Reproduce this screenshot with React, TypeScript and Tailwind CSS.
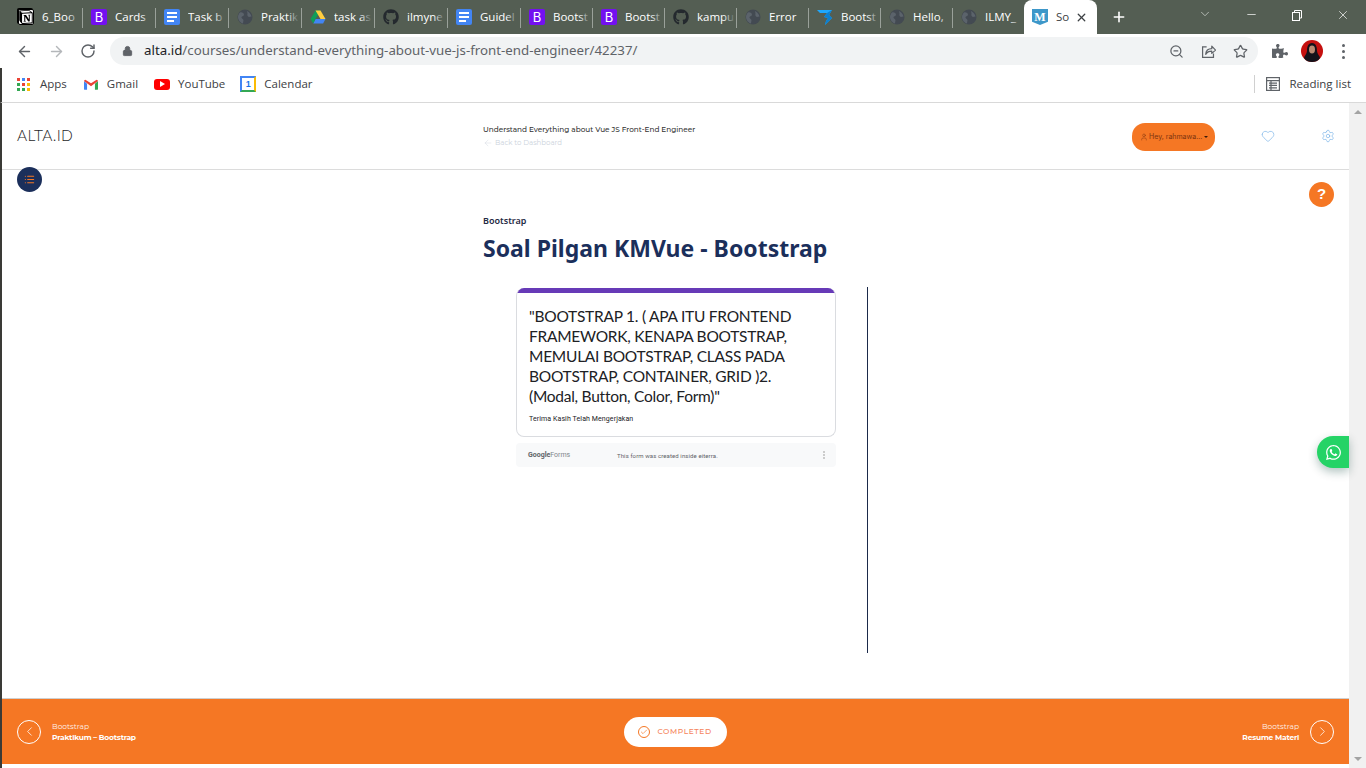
import React from "react";
import { ArrowLeft, ArrowRight, RotateCw, Lock, ZoomOut, Star, ChevronDown, Minus, X, Plus, Heart, Settings, User, ChevronLeft, ChevronRight, Check, List } from "lucide-react";
import { FaGithub, FaWhatsapp, FaPuzzlePiece } from "react-icons/fa";
import { SiNotion } from "react-icons/si";

const BootstrapIcon = () => (
  <div className="w-4 h-4 rounded-[2px] bg-[#7310f0] flex items-center justify-center text-white text-[13px] leading-none font-['Inter',sans-serif]">B</div>
);
const DocsIcon = () => (
  <div className="w-4 h-4 rounded-[2px] bg-[#4285f4] flex flex-col justify-center gap-[2px] pl-[3px]">
    <div className="w-[10px] h-[2px] bg-white" />
    <div className="w-[10px] h-[2px] bg-white" />
    <div className="w-[7px] h-[2px] bg-white" />
  </div>
);
const DarkGlobe = () => (
  <svg viewBox="0 0 16 16" className="w-4 h-4">
    <circle cx="8" cy="8" r="7.5" fill="#434a52" />
    <path d="M3 3.5 C5 3 7 4 7 6 C7 7 5 7 4.5 8 C4 9 6 10 6.5 11 L6 14.5 C3.5 14 1 11 1 8 C1 6 2 4.5 3 3.5Z M10 2 C12 3 14 5 14.5 7.5 L12 8 C10.5 7.5 10 6 10.5 4.5Z" fill="#5b636b" />
  </svg>
);
const DriveIcon = () => (
  <svg viewBox="0 0 16 16" className="w-4 h-4">
    <path d="M5.5 1.5h5L5.5 10H.5z" fill="#0f9d58" />
    <path d="M5.5 1.5h5l5 8.5h-5z" fill="#ffcd40" />
    <path d="M3.2 14.5 5.5 10h10l-2.4 4.5z" fill="#4285f4" />
    <path d="M.5 10h5l-2.3 4.5z" fill="#0f9d58" />
  </svg>
);
const TwIcon = () => (
  <svg viewBox="0 0 16 18" className="w-4 h-[18px]">
    <path d="M0 2h15l-3 5 3 3-7 7 1-4 2-3-4-1 3-4H3z" fill="#1ea7fd" />
    <path d="M15 2l-3 5 3 3-7 7 1-4 2-3-4-1 3-4z" fill="#0c7fd0" />
  </svg>
);
const NotionIcon = () => (
  <div className="w-4 h-4 bg-white rounded-[2px] flex items-center justify-center border border-black shadow-[-1px_-1px_0_#000]">
    <SiNotion className="w-[18px] h-[18px] text-black" />
  </div>
);
const MIcon = () => (
  <div className="w-4 h-4 bg-[#3d97c9] [clip-path:polygon(0_0,100%_0,100%_80%,50%_100%,0_80%)] flex items-center justify-center text-white text-[12px] font-bold leading-none font-['Liberation_Serif',serif]">M</div>
);

const tabs: [React.ReactNode, string][] = [
  [<NotionIcon />, "6_Boo"],
  [<BootstrapIcon />, "Cards"],
  [<DocsIcon />, "Task b"],
  [<DarkGlobe />, "Praktik"],
  [<DriveIcon />, "task as"],
  [<FaGithub className="w-4 h-4 text-[#24292e]" />, "ilmyne"],
  [<DocsIcon />, "Guidel"],
  [<BootstrapIcon />, "Bootst"],
  [<BootstrapIcon />, "Bootst"],
  [<FaGithub className="w-4 h-4 text-[#24292e]" />, "kampu"],
  [<DarkGlobe />, "Error"],
  [<TwIcon />, "Bootst"],
  [<DarkGlobe />, "Hello,"],
  [<DarkGlobe />, "ILMY_"],
];

const ff = "font-['Open_Sans',sans-serif]";

function TabStrip() {
  return (
    <div className="h-[34px] bg-[#545e53] flex items-start pl-[10px] shrink-0">
      {tabs.map(([icon, label], i) => (
        <div key={i} className={`${i < 7 ? "w-[73px]" : "w-[72px]"} h-[34px] flex items-center relative pl-2 shrink-0`}>
          <div className="w-4 h-4 flex items-center justify-center shrink-0">{icon}</div>
          <div className={`ml-2 w-[38px] overflow-hidden whitespace-nowrap text-[11.5px] text-white ${ff} relative`}>
            {label}
            <div className="absolute right-0 top-0 bottom-0 w-3 bg-gradient-to-r from-transparent to-[#545e53]" />
          </div>
          {i < 13 && <div className="absolute right-0 top-[8px] h-[20px] w-px bg-[#9aa19a]" />}
        </div>
      ))}
      <div className="w-[73px] h-[34px] bg-white rounded-t-lg flex items-center pl-2 shrink-0 ml-[-1px]">
        <MIcon />
        <div className={`ml-2 w-[14px] overflow-hidden whitespace-nowrap text-[11.5px] text-[#3c4043] ${ff}`}>So</div>
        <X className="ml-[5px] w-[13px] h-[13px] text-[#3c4043]" strokeWidth={2.4} />
      </div>
      <Plus className="ml-[14px] mt-[9px] w-[16px] h-[16px] text-white shrink-0" strokeWidth={2.4} />
      <ChevronDown className="ml-[71px] mt-[7px] w-[14px] h-[14px] text-[#d8dcd8] shrink-0" strokeWidth={1.2} />
      <Minus className="ml-[33px] mt-[8px] w-[13px] h-[13px] text-white shrink-0" strokeWidth={1.3} />
      <svg viewBox="0 0 12 12" className="ml-[33px] mt-[9px] w-[12px] h-[12px] shrink-0 text-white" fill="none" stroke="currentColor">
        <rect x="1.5" y="3.5" width="7" height="8" />
        <path d="M3.5 3.5V1.5h7v7.5h-2" />
      </svg>
      <X className="ml-[33px] mt-[8px] w-[14px] h-[14px] text-white shrink-0" strokeWidth={1.2} />
    </div>
  );
}

function Toolbar() {
  return (
    <div className="h-[34px] bg-white flex items-center pl-[16px] shrink-0">
      <ArrowLeft className="w-[17px] h-[17px] text-[#5f6368]" strokeWidth={2} />
      <ArrowRight className="ml-[15px] w-[17px] h-[17px] text-[#b4b7ba]" strokeWidth={2} />
      <RotateCw className="ml-[15px] w-[16px] h-[16px] text-[#5f6368]" strokeWidth={2.2} />
      <div className="ml-[14px] w-[1148px] h-[28px] rounded-full bg-[#f1f3f4] flex items-center pl-[12px] pr-[10px]">
        <Lock className="w-[11px] h-[12px] text-[#5f6368] fill-[#5f6368]" strokeWidth={2} />
        <div className="ml-[11px] text-[13.3px] text-[#5f6368] font-['Noto_Sans',sans-serif] whitespace-nowrap">
          <span className="text-[#202124]">alta.id</span>/courses/understand-everything-about-vue-js-front-end-engineer/42237/
        </div>
        <div className="flex-1" />
        <ZoomOut className="w-[15px] h-[15px] text-[#5f6368]" strokeWidth={2} />
        <svg viewBox="0 0 16 16" className="ml-[17px] w-[15px] h-[15px] text-[#5f6368]" fill="none" stroke="currentColor" strokeWidth="1.3">
          <path d="M6 3H1.7v11.3h11.6V10" />
          <path d="M5 11c.3-4 3-6 6.5-6V2.3L15.5 6.5 11.5 10V7.6C9 7.6 6.5 8.5 5 11z" strokeLinejoin="round" />
        </svg>
        <Star className="ml-[17px] w-[15px] h-[15px] text-[#5f6368]" strokeWidth={2} />
      </div>
      <FaPuzzlePiece className="ml-[14px] w-[16px] h-[16px] text-[#5f6368]" />
      <svg viewBox="0 0 22 22" className="ml-[13px] w-[22px] h-[22px] shrink-0">
        <circle cx="11" cy="11" r="11" fill="#c5100f" />
        <path d="M11 3c4 0 5 4 5 8 0 3 3 5 3 7-2 3-5 4-8 4s-6-1-8-4c0-2 3-4 3-7 0-4 1-8 5-8z" fill="#14121a" />
        <ellipse cx="11" cy="9.5" rx="3" ry="4" fill="#b98a72" />
      </svg>
      <div className="ml-[19px] flex flex-col gap-[3px]">
        <div className="w-[3px] h-[3px] rounded-full bg-[#5f6368]" />
        <div className="w-[3px] h-[3px] rounded-full bg-[#5f6368]" />
        <div className="w-[3px] h-[3px] rounded-full bg-[#5f6368]" />
      </div>
    </div>
  );
}

const appColors = ["#ea4335", "#4285f4", "#ea4335", "#34a853", "#ea4335", "#fbbc04", "#34a853", "#34a853", "#fbbc04"];

function Bookmarks() {
  const t = `text-[11.5px] text-[#3c4043] ${ff}`;
  return (
    <div className="h-[35px] bg-white flex items-center pl-[15px] border-l-2 border-l-[#3a3a36] border-b border-b-[#d9d9d9] shrink-0 pb-[2px]">
      <div className="grid grid-cols-3 gap-[2px] w-[13px]">
        {appColors.map((c, i) => (
          <div key={i} className="w-[3px] h-[3px]" style={{ background: c }} />
        ))}
      </div>
      <span className={`ml-[10px] ${t}`}>Apps</span>
      <svg viewBox="0 0 16 12" className="ml-[17px] w-[14px] h-[11px]">
        <path d="M0 2v9a1 1 0 0 0 1 1h2.5V5z" fill="#4285f4" />
        <path d="M16 2v9a1 1 0 0 1-1 1h-2.5V5z" fill="#34a853" />
        <path d="M0 2 8 8l8-6a1.5 1.5 0 0 0-2.5-1L8 4.5 2.5 1A1.5 1.5 0 0 0 0 2z" fill="#ea4335" />
      </svg>
      <span className={`ml-[9px] ${t}`}>Gmail</span>
      <div className="ml-[16px] w-[16px] h-[11px] bg-[#f00] rounded-[3px] flex items-center justify-center">
        <div className="w-0 h-0 border-y-[3px] border-y-transparent border-l-[5px] border-l-white" />
      </div>
      <span className={`ml-[8px] ${t}`}>YouTube</span>
      <div className="ml-[15px] w-[16px] h-[16px] border-2 border-t-[#4285f4] border-l-[#4285f4] border-r-[#fbbc04] border-b-[#34a853] flex items-center justify-center text-[9px] leading-none font-bold text-[#1a73e8] font-['Liberation_Sans',sans-serif]">1</div>
      <span className={`ml-[8px] ${t}`}>Calendar</span>
      <div className="flex-1" />
      <div className="w-px h-[18px] bg-[#d0d0d0]" />
      <svg viewBox="0 0 14 14" className="ml-[11px] w-[14px] h-[14px]" fill="none" stroke="#5f6368" strokeWidth="1.2">
        <rect x=".6" y=".6" width="12.8" height="12.8" />
        <path d="M.6 3.6h12.8M3 6.2h8M3 8.4h8M3 10.8h8M5 3.6v9.8" />
      </svg>
      <span className={`ml-[9px] mr-[15px] ${t}`}>Reading list</span>
    </div>
  );
}

function SiteHeader() {
  return (
    <div className="h-[67px] border-b border-[#dcdcdc] flex items-center pl-[15px] shrink-0">
      <div className="w-[466px] text-[15.5px] font-light text-[#1f1f28] font-['Lato',sans-serif] tracking-[0.3px]">ALTA.ID</div>
      <div className="w-[649px] font-['Montserrat','Inter',sans-serif]">
        <div className="text-[7.3px] leading-[12px] text-[#333] font-medium">Understand Everything about Vue JS Front-End Engineer</div>
        <div className="text-[7px] leading-[12px] mt-[1px] text-[#ccd3dc] flex items-center">
          <ArrowLeft className="w-[10px] h-[10px] mr-[2px]" strokeWidth={1} />
          Back to Dashboard
        </div>
      </div>
      <div className="w-[83px] h-[28px] mt-[2px] bg-[#f57724] rounded-[13px] flex items-center pl-[8px] text-[7px] text-[#7c3410] font-['Inter',sans-serif] whitespace-nowrap">
        <User className="w-[8px] h-[8px] mr-[1px]" strokeWidth={1.5} />
        Hey, rahmawa...
        <div className="ml-[2px] w-0 h-0 border-x-[2px] border-x-transparent border-t-[2px] border-t-[#3a1a08]" />
      </div>
      <Heart className="ml-[46px] w-[14px] h-[14px] text-[#7eb6e8]" strokeWidth={1.2} />
      <Settings className="ml-[46px] w-[14px] h-[14px] text-[#7eb6e8]" strokeWidth={1.2} />
    </div>
  );
}

function FormEmbed() {
  return (
    <div className="w-[385px] h-[366px] mt-[24px] border-r border-[#1b2a4a] pl-[33px] pt-px">
      <div className="w-[320px] h-[149px] rounded-lg border border-[#dadce0] border-t-0 bg-white overflow-hidden">
        <div className="h-[5px] bg-[#673ab7] mx-[-1px]" />
        <div className="pl-[12px] pt-[13px] text-[15.5px] leading-[20px] text-[#202124] font-['Lato',sans-serif] tracking-[-0.25px]">
          "BOOTSTRAP 1. ( APA ITU FRONTEND<br />FRAMEWORK, KENAPA BOOTSTRAP,<br />MEMULAI BOOTSTRAP, CLASS PADA<br />BOOTSTRAP, CONTAINER, GRID )2.<br />(Modal, Button, Color, Form)"
        </div>
        <div className="pl-[12px] mt-[9px] text-[7px] leading-[9px] text-[#202124] font-['Roboto',sans-serif] tracking-[0.1px]">Terima Kasih Telah Mengerjakan</div>
      </div>
      <div className="w-[320px] h-[24px] mt-[6px] bg-[#f8f9fa] rounded flex items-center pl-[12px] font-['Roboto',sans-serif]">
        <span className="w-[89px] text-[7px] whitespace-nowrap">
          <span className="font-bold text-[#5f6368]">Google</span>
          <span className="text-[#80868b]">Forms</span>
        </span>
        <span className="text-[6px] text-[#5f6368] tracking-[0.1px]">This form was created inside eiterra.</span>
        <div className="flex-1" />
        <div className="mr-[11px] flex flex-col gap-px">
          <div className="w-[2px] h-[2px] bg-[#ccc]" />
          <div className="w-[2px] h-[2px] bg-[#ccc]" />
          <div className="w-[2px] h-[2px] bg-[#ccc]" />
        </div>
      </div>
    </div>
  );
}

function Footer() {
  const f = "font-['Montserrat','Inter',sans-serif]";
  return (
    <div className="h-[66px] border-t border-[#cfcfcf] bg-[#f57724] flex items-center px-[15px] shrink-0 text-white relative">
      <div className="w-[24px] h-[24px] rounded-full border border-white flex items-center justify-center">
        <ChevronLeft className="w-[15px] h-[15px]" strokeWidth={1.2} />
      </div>
      <div className={`ml-[11px] pt-px ${f} text-[7.5px] leading-[11px]`}>
        <div className="text-[#fff1e8]">Bootstrap</div>
        <div className="font-bold whitespace-nowrap tracking-[-0.2px]">Praktikum – Bootstrap</div>
      </div>
      <div className="flex-1 flex justify-center pr-[28px]">
        <div className={`w-[103px] h-[30px] bg-white rounded-full flex items-center justify-center gap-[7px] text-[7.5px] font-medium tracking-[0.6px] text-[#f5845c] ${f}`}>
          <div className="w-[12px] h-[12px] rounded-full border border-[#f57724] flex items-center justify-center">
            <Check className="w-[8px] h-[8px] text-[#f57724]" strokeWidth={2} />
          </div>
          COMPLETED
        </div>
      </div>
      <div className={`mr-[11px] pt-px ${f} text-[7.5px] leading-[11px] text-right`}>
        <div className="text-[#fff1e8]">Bootstrap</div>
        <div className="font-bold whitespace-nowrap tracking-[-0.2px]">Resume Materi</div>
      </div>
      <div className="w-[24px] h-[24px] rounded-full border border-white flex items-center justify-center">
        <ChevronRight className="w-[15px] h-[15px]" strokeWidth={1.2} />
      </div>
    </div>
  );
}

export default function App() {
  return (
    <div className="w-[1366px] h-[768px] overflow-hidden flex flex-col bg-white">
      <TabStrip />
      <Toolbar />
      <Bookmarks />
      <div className="flex-1 flex min-h-0">
        <div className="w-[2px] bg-[#3a3a36] shrink-0" />
        <div className="flex-1 flex flex-col min-w-0 relative">
          <SiteHeader />
          <div className="flex-1 pl-[481px] pt-[45px]">
            <div className="text-[9px] leading-[12px] font-semibold text-[#1f2a44] font-['Noto_Sans',sans-serif]">Bootstrap</div>
            <div className="mt-[6px] text-[23px] leading-[30px] font-bold text-[#1b2f5b] font-['Noto_Sans',sans-serif]">Soal Pilgan KMVue - Bootstrap</div>
            <FormEmbed />
          </div>
          <Footer />
          <div className="h-1 bg-white shrink-0" />
          <div className="absolute left-[15px] top-[64px] w-[25px] h-[25px] rounded-full bg-[#1b2f5b] flex items-center justify-center">
            <List className="w-[11px] h-[11px] text-[#f57724]" strokeWidth={2.5} />
          </div>
          <div className="absolute right-[15px] top-[79px] w-[25px] h-[25px] rounded-full bg-[#f57724] flex items-center justify-center text-white text-[15px] font-bold font-['Liberation_Sans',sans-serif]">?</div>
          <div className="absolute right-0 top-[333px] w-[32px] h-[32px] rounded-l-full bg-[#25d366] flex items-center justify-center text-white shadow-[0_4px_10px_rgba(0,60,50,0.3)]">
            <FaWhatsapp className="w-[17px] h-[17px]" />
          </div>
        </div>
        <div className="w-[17px] bg-[#f1f1f1] shrink-0 flex flex-col items-center justify-between py-[7px]">
          <div className="w-0 h-0 border-x-[4px] border-x-transparent border-b-[4px] border-b-[#a3a3a3]" />
          <div className="w-0 h-0 border-x-[4px] border-x-transparent border-t-[4px] border-t-[#a3a3a3]" />
        </div>
      </div>
    </div>
  );
}
